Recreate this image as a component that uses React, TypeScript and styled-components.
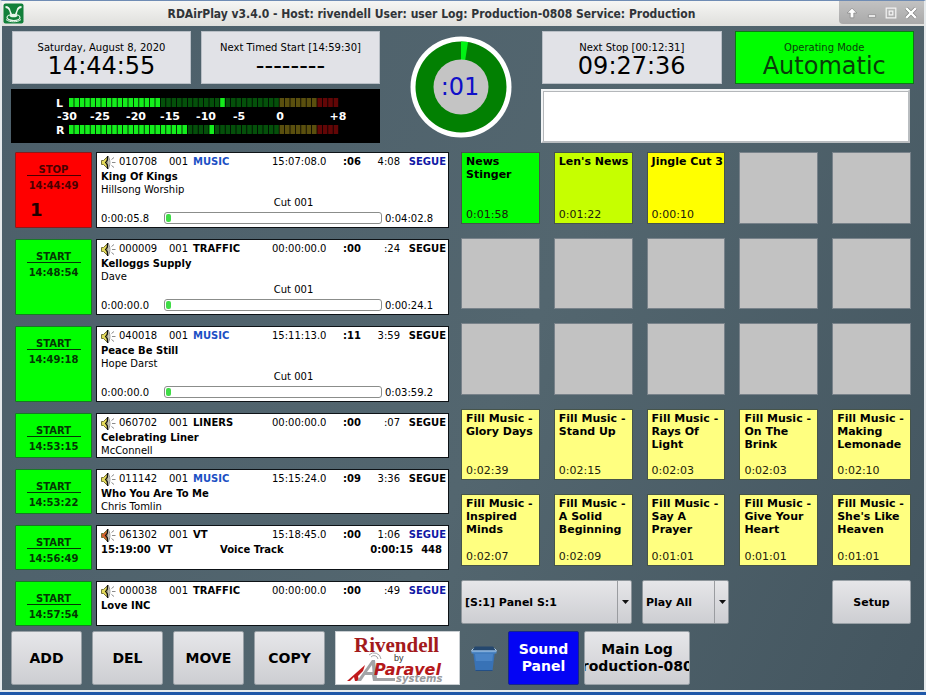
import React from "react";
import styled, { createGlobalStyle } from "styled-components";

const GlobalStyle = createGlobalStyle`
  *, *::before, *::after { box-sizing: border-box; }
  body {
    margin: 0;
    background: #2058a8;
    color: #000;
    font-family: "DejaVu Sans", Verdana, sans-serif;
    font-size: 10px;
  }
  button, select, textarea { font-family: inherit; color: inherit; margin: 0; }
`;

/* ---------- window frame ---------- */

const Frame = styled.div`
  display: flex;
  flex-direction: column;
  min-height: calc(100vh - 3px);
  margin-bottom: 3px;
  border: solid #e6eaec;
  border-width: 0 2px 2px 2px;
  border-top: 1px solid #6f8cb4;
  background: linear-gradient(115deg, #4c5f6a 0%, #53666f 55%, #43555f 100%);
`;

const TitleBar = styled.header`
  display: flex;
  align-items: center;
  height: 25px;
  padding-left: 1px;
  background: linear-gradient(#f6f6f4, #dfdfdc);
`;

const Title = styled.h1`
  flex: 1;
  margin: 0;
  text-align: center;
  font: bold 12px/24px "DejaVu Sans Condensed", "DejaVu Sans", sans-serif;
  color: #303438;
  white-space: nowrap;
`;

const WindowButtons = styled.div`
  display: flex;
  align-self: flex-start;
  align-items: center;
  justify-content: space-around;
  width: 85px;
  height: 23px;
  padding: 0 3px;
  border-bottom-left-radius: 4px;
  background: linear-gradient(#c2c2c2, #a9a9a9);
`;

const WindowButton = styled.button`
  display: grid;
  place-items: center;
  width: 18px;
  height: 20px;
  padding: 0;
  border: 0;
  background: none;
`;

/* ---------- header ---------- */

const Content = styled.main`
  display: flex;
  flex: 1;
  flex-direction: column;
  padding: 5px 10px 4px 9px;
`;

const Header = styled.div`
  display: grid;
  grid-template-columns: 369fr 161fr 373fr;
`;

const HeaderSide = styled.section`
  display: flex;
  flex-direction: column;
  gap: 5px;
`;

const PanelPair = styled.div<{ $gap: number }>`
  display: grid;
  grid-template-columns: 1fr 1fr;
  gap: ${(p) => p.$gap}px;
  padding-left: 1px;
`;

const InfoPanel = styled.div<{ $active?: boolean }>`
  display: flex;
  flex-direction: column;
  align-items: center;
  height: 53px;
  padding-top: 9px;
  border: 1px solid ${(p) => (p.$active ? "#0b7a12" : "#b9bfc6")};
  background: ${(p) => (p.$active ? "#00ff00" : "#e1e2e7")};
  color: ${(p) => (p.$active ? "#0a3d0a" : "#000")};
`;

const PanelLabel = styled.span`
  line-height: 13px;
  white-space: nowrap;
`;

const PanelValue = styled.span`
  font-size: 24px;
  line-height: 25px;
`;

const MeterPanel = styled.div`
  display: flex;
  height: 54px;
  padding-left: 40px;
  background: #000;
`;

const ClockCell = styled.div`
  display: flex;
  justify-content: center;
  padding-top: 5px;
`;

const MessageBox = styled.textarea`
  width: calc(100% - 4px);
  height: 54px;
  border: 2px solid #b9bdc0;
  border-top-color: #f2f4f5;
  border-left-color: #f2f4f5;
  outline: 0;
  background: #fff;
  box-shadow: inset 1px 1px 0 #b4b7ba;
  resize: none;
`;

/* ---------- log ---------- */

const Middle = styled.div`
  display: grid;
  grid-template-columns: 434fr 450fr;
  gap: 12px;
  padding: 9px 3px 5px 4px;
`;

const LogList = styled.ol`
  display: flex;
  flex-direction: column;
  gap: 11px;
  margin: 0;
  padding: 0;
  list-style: none;
`;

const LogRow = styled.li<{ $large?: boolean }>`
  display: grid;
  grid-template-columns: 77px 1fr;
  gap: 4px;
  height: ${(p) => (p.$large ? 76 : 45)}px;
`;

const StartButton = styled.button<{ $playing?: boolean }>`
  display: flex;
  flex-direction: column;
  align-items: center;
  padding: 10px 10px 0;
  border: 1px solid ${(p) => (p.$playing ? "#8c1a1a" : "#177a24")};
  border-radius: 1px;
  background: ${(p) => (p.$playing ? "#ff0000" : "#00ff00")};
  color: ${(p) => (p.$playing ? "#4a0000" : "#043604")};
  font-size: 10px;
  font-weight: bold;
`;

const StartLabel = styled.span`
  width: 54px;
  height: 13px;
  border-bottom: 1px solid currentColor;
  line-height: 13px;
`;

const StartTime = styled.span`
  line-height: 19px;
`;

const Machine = styled.span`
  align-self: flex-start;
  padding: 5px 0 0 4px;
  color: #200000;
  font-size: 18px;
  line-height: 20px;
`;

const Card = styled.div`
  display: flex;
  flex-direction: column;
  min-width: 0;
  padding: 1px 2px 0 4px;
  border: 1px solid #0d1216;
  background: #fff;
  white-space: nowrap;
`;

const CardTop = styled.div`
  display: grid;
  grid-template-columns: 18px 50px 24px 1fr 71px 18px 39px 46px;
  align-items: center;
  height: 16px;
  line-height: 16px;
`;

const Cell = styled.span<{ $bold?: boolean; $color?: string; $end?: boolean }>`
  color: ${(p) => p.$color ?? "#000"};
  font-weight: ${(p) => (p.$bold ? "bold" : "normal")};
  text-align: ${(p) => (p.$end ? "right" : "left")};
`;

const CardTitle = styled.strong`
  line-height: 14px;
`;

const CardArtist = styled.span`
  line-height: 12px;
`;

const VoiceRow = styled.div`
  display: grid;
  grid-template-columns: 57px 62px 1fr auto auto;
  padding-right: 4px;
  font-weight: bold;
  line-height: 14px;
`;

const Spaced = styled.span`
  padding-left: 8px;
`;

const CutName = styled.span`
  align-self: center;
  padding-left: 40px;
  line-height: 14px;
`;

const ProgressRow = styled.div`
  display: grid;
  grid-template-columns: 60px 1fr 61px;
  gap: 3px;
  align-items: center;
  height: 16px;
`;

const Progress = styled.div`
  height: 12px;
  padding: 1px;
  border: 1px solid #8b8d8b;
  border-radius: 3px;
  background: #fff;
`;

const ProgressFill = styled.div`
  width: 5px;
  height: 8px;
  border-radius: 2px;
  background: #3fdc46;
`;

/* ---------- sound panel ---------- */

const SoundColumn = styled.section`
  display: flex;
  flex-direction: column;
  gap: 14px;
  padding: 0 0 2px;
`;

const PadGrid = styled.div`
  display: grid;
  flex: 1;
  grid-template-columns: repeat(5, 1fr);
  grid-template-rows: repeat(5, 1fr);
  gap: 14px;
`;

const Pad = styled.button<{ $fill?: string }>`
  display: flex;
  flex-direction: column;
  justify-content: space-between;
  min-width: 0;
  min-height: 0;
  padding: 2px 0 2px 4px;
  border: 1px solid ${(p) => (p.$fill ? "#46544a" : "#78828a")};
  background: ${(p) => p.$fill ?? "#c2c2c2"};
  font-size: 11px;
  line-height: 13px;
  text-align: left;
`;

const PadTitle = styled.strong`
  white-space: pre;
`;

const PadTime = styled.span`
  color: #1c200c;
`;

const Controls = styled.div`
  display: grid;
  grid-template-columns: 171fr 87fr 83fr 79fr;
  column-gap: 10px;
  height: 44px;
`;

const SelectBox = styled.label`
  display: grid;
  min-width: 0;
`;

const Select = styled.select`
  grid-area: 1 / 1;
  width: 100%;
  min-width: 0;
  padding: 0 16px 0 3px;
  border: 1px solid #8d959b;
  border-radius: 2px;
  appearance: none;
  background: linear-gradient(#e6e6e9, #cdced2);
  font-size: 11px;
  font-weight: bold;
`;

const SelectArrow = styled.span`
  display: grid;
  grid-area: 1 / 1;
  justify-self: end;
  place-items: center;
  width: 15px;
  margin: 1px 0;
  border-left: 1px solid #9a9ca0;
  pointer-events: none;
`;

/* ---------- footer ---------- */

const Footer = styled.footer`
  display: flex;
  gap: 10px;
  height: 54px;
`;

const PushButton = styled.button<{ $active?: boolean; $width?: number; $small?: boolean }>`
  display: flex;
  align-items: center;
  justify-content: center;
  width: ${(p) => (p.$width ? `${p.$width}px` : "auto")};
  padding: 0;
  overflow: hidden;
  border: 1px solid ${(p) => (p.$active ? "#16268c" : "#98a0a6")};
  border-radius: 2px;
  background: ${(p) => (p.$active ? "#0404f4" : "linear-gradient(#e6e6e9, #cdced2)")};
  color: ${(p) => (p.$active ? "#fff" : "#000")};
  font-size: ${(p) => (p.$small ? 11 : 14)}px;
  font-weight: bold;
  line-height: 17px;
  white-space: pre;
`;

const LogoPanel = styled.div`
  width: 125px;
  border: 1px solid #c9ced2;
  background: #fff;
`;

const TrashButton = styled.button`
  display: grid;
  place-items: center;
  width: 28px;
  padding: 0;
  border: 0;
  background: none;
`;

const ViewButtons = styled.div`
  display: flex;
  gap: 5px;
`;

/* ---------- drawings ---------- */

const AppIcon = () => (
  <svg width="21" height="21" viewBox="0 0 21 21" aria-hidden="true">
    <rect x="0.5" y="0.5" width="20" height="20" rx="2" fill="#12803a" />
    <path d="M2.500 3c3 0 4.500 1.500 5 4.500L9 11H7C6.500 7 5 5.500 2.500 5zM18.500 3c-3 0-4.500 1.500-5 4.500L12 11h2c.5-4 2-5.500 4.500-6z" fill="#eef8ef" />
    <ellipse cx="10.500" cy="14.500" rx="6.500" ry="3" fill="none" stroke="#e8f6ea" strokeWidth="1.200" />
    <ellipse cx="10.500" cy="12.500" rx="4" ry="1.800" fill="#e8f6ea" />
    <path d="M3 16.500c3 3 12 3 15 0" fill="none" stroke="#e8f6ea" />
  </svg>
);

const Speaker = ({ color }: { color: string }) => (
  <svg width="15" height="15" viewBox="0 0 15 15" aria-hidden="true">
    <path d="M0.500 5.500h2L6 2v11L2.500 9.500h-2z" fill={color} stroke="#77733a" strokeWidth="1" />
    <path d="M7 1c2.500 3.500 2.500 9.500 0 13z" fill="#f4f4ee" stroke="#6c6c66" strokeWidth=".7" />
    <path d="M6.500 1v4L4.500 7.500l2 2.500v4" fill="none" stroke="#111" strokeWidth="1.100" />
    <path d="M10.500 4.500L13 2.500M11 7.500h3.500M10.500 10.500l2.500 2" stroke="#8a8a8a" strokeWidth="1" />
  </svg>
);

const SEGMENTS = 50;

const segmentColor = (i: number, level: number, peak: number) => {
  if (i < level || i === peak) return "#14ee1c";
  if (i < 39) return "#04500a";
  if (i < 46) return "#5a4f0e";
  return "#620606";
};

const Bar = ({ y, level, peak }: { y: number; level: number; peak: number }) => (
  <g>
    {Array.from({ length: SEGMENTS }, (_, i) => (
      <rect key={i} x={18 + i * 5.4} y={y} width="4.6" height="9" fill={segmentColor(i, level, peak)} />
    ))}
  </g>
);

const SCALE: [string, number][] = [
  ["-30", 16], ["-25", 49], ["-20", 85], ["-15", 119],
  ["-10", 155], ["-5", 188], ["0", 229], ["+8", 287],
];

const Meter = () => (
  <svg width="300" height="54" viewBox="0 0 300 54" role="img" aria-label="Audio levels"
    fontSize="11" fontWeight="bold" fill="#fff">
    <text x="5" y="18">L</text>
    <Bar y={9} level={17} peak={28} />
    {SCALE.map(([label, x]) => (
      <text key={label} x={x} y="31" textAnchor="middle">{label}</text>
    ))}
    <text x="5" y="45">R</text>
    <Bar y={36} level={22} peak={26} />
  </svg>
);

const PieClock = () => (
  <svg width="102" height="102" viewBox="0 0 102 102" role="img" aria-label="Time remaining">
    <circle cx="51" cy="51" r="50.500" fill="#fff" />
    <circle cx="51" cy="51" r="45.500" fill="#028002" />
    <path d="M51 51V5.500a45.500 45.500 0 0 1 7 .6z" fill="#00f414" />
    <circle cx="51" cy="51" r="27.500" fill="#c4c4c4" />
    <text x="50" y="59" textAnchor="middle" fontSize="24" fill="#1010c8">:01</text>
  </svg>
);

const Arrow = () => (
  <svg width="7" height="4" viewBox="0 0 7 4" aria-hidden="true"><path d="M0 0h7L3.500 4z" fill="#111" /></svg>
);

const Logo = () => (
  <svg width="122" height="52" viewBox="0 0 122 52" role="img" aria-label="Rivendell by Paravel Systems">
    <text x="18" y="20" fontFamily="Liberation Serif, serif" fontSize="21" fontWeight="bold" fill="#a31a1c">Rivendell</text>
    <text x="58" y="29" fontFamily="Liberation Sans, sans-serif" fontSize="9" fill="#333">by</text>
    <path d="M11 49L29 33l-2 6-5 5 1 5h-4l-1-4-4 4z" fill="#c01a1c" />
    <path d="M21 49L36 28h3l2 18h18v3H37l-1-6h-7l-4 6z" fill="#a2a4a6" />
    <path d="M31 40l5-7 .5 7z" fill="#fff" />
    <path d="M35 25a4 4 0 0 1 7 2M33 23a7 7 0 0 1 12 4" fill="none" stroke="#a2a4a6" strokeWidth="1" />
    <text x="60" y="50" fontSize="10" fontWeight="bold" fontStyle="italic" fill="#9a9c9e">systems</text>
    <text x="38" y="43" fontSize="16" fontWeight="bold" fontStyle="italic" fill="#b5181a">Paravel</text>
  </svg>
);

const Trash = () => (
  <svg width="26" height="25" viewBox="0 0 26 25" aria-hidden="true">
    <path d="M2 3l2-2.500h18L24 3v3H2z" fill="#24476e" />
    <path d="M2 5h22l-2.500 19.500h-17z" fill="#3872b6" />
    <path d="M4 8h18l-.6 7H4.800z" fill="#4a84c6" />
    <path d="M0.500 4.500h25v3h-25z" fill="#4c86c4" />
    <path d="M0.500 4.500l2-2M25.500 4.500l-2-2M0.500 5h25" stroke="#b5d2ee" strokeWidth="1" />
    <path d="M4.500 24.500h17" stroke="#234f86" strokeWidth="1" />
  </svg>
);

/* ---------- data ---------- */

const BLUE = "#1018a4";
const MUSIC = "#1c50c4";

type Entry = {
  start: string; cart: string; group: string; time: string; talk: string; length: string;
  title?: string; artist?: string; total?: string; elapsed?: string; playing?: boolean;
  segueBlue?: boolean; voice?: boolean;
};

const LOG: Entry[] = [
  { start: "14:44:49", cart: "010708", group: "MUSIC", time: "15:07:08.0", talk: ":06", length: "4:08", title: "King Of Kings", artist: "Hillsong Worship", elapsed: "0:00:05.8", total: "0:04:02.8", playing: true, segueBlue: true },
  { start: "14:48:54", cart: "000009", group: "TRAFFIC", time: "00:00:00.0", talk: ":00", length: ":24", title: "Kelloggs Supply", artist: "Dave", elapsed: "0:00:00.0", total: "0:00:24.1" },
  { start: "14:49:18", cart: "040018", group: "MUSIC", time: "15:11:13.0", talk: ":11", length: "3:59", title: "Peace Be Still", artist: "Hope Darst", elapsed: "0:00:00.0", total: "0:03:59.2" },
  { start: "14:53:15", cart: "060702", group: "LINERS", time: "00:00:00.0", talk: ":00", length: ":07", title: "Celebrating Liner", artist: "McConnell" },
  { start: "14:53:22", cart: "011142", group: "MUSIC", time: "15:15:24.0", talk: ":09", length: "3:36", title: "Who You Are To Me", artist: "Chris Tomlin" },
  { start: "14:56:49", cart: "061302", group: "VT", time: "15:18:45.0", talk: ":00", length: "1:06", voice: true, segueBlue: true },
  { start: "14:57:54", cart: "000038", group: "TRAFFIC", time: "00:00:00.0", talk: ":00", length: ":49", title: "Love INC", segueBlue: true },
];

type PadData = { title: string; time: string; fill: string } | null;

const Y = "#ffff80";
const PADS: PadData[] = [
  { title: "News\nStinger", time: "0:01:58", fill: "#00ff00" },
  { title: "Len's News", time: "0:01:22", fill: "#c6ff00" },
  { title: "Jingle Cut 3", time: "0:00:10", fill: "#ffff00" },
  null, null,
  null, null, null, null, null,
  null, null, null, null, null,
  { title: "Fill Music -\nGlory Days", time: "0:02:39", fill: Y },
  { title: "Fill Music -\nStand Up", time: "0:02:15", fill: Y },
  { title: "Fill Music -\nRays Of\nLight", time: "0:02:03", fill: Y },
  { title: "Fill Music -\nOn The\nBrink", time: "0:02:03", fill: Y },
  { title: "Fill Music -\nMaking\nLemonade", time: "0:02:10", fill: Y },
  { title: "Fill Music -\nInspired\nMinds", time: "0:02:07", fill: Y },
  { title: "Fill Music -\nA Solid\nBeginning", time: "0:02:09", fill: Y },
  { title: "Fill Music -\nSay A\nPrayer", time: "0:01:01", fill: Y },
  { title: "Fill Music -\nGive Your\nHeart", time: "0:01:01", fill: Y },
  { title: "Fill Music -\nShe's Like\nHeaven", time: "0:01:01", fill: Y },
];

/* ---------- parts ---------- */

const LogEntry = ({ e }: { e: Entry }) => (
  <LogRow $large={!!e.total}>
    <StartButton $playing={e.playing}>
      <StartLabel>{e.playing ? "STOP" : "START"}</StartLabel>
      <StartTime>{e.start}</StartTime>
      {e.playing && <Machine>1</Machine>}
    </StartButton>
    <Card>
      <CardTop>
        <Speaker color={e.voice ? "#d2622c" : "#e6dc5a"} />
        <Cell>{e.cart}</Cell>
        <Cell>001</Cell>
        <Cell $bold $color={e.group === "MUSIC" ? MUSIC : "#000"}>{e.group}</Cell>
        <Cell>{e.time}</Cell>
        <Cell $bold>{e.talk}</Cell>
        <Cell $end>{e.length}</Cell>
        <Cell $bold $end $color={e.segueBlue ? BLUE : "#000"}>SEGUE</Cell>
      </CardTop>
      {e.voice ? (
        <VoiceRow>
          <span>15:19:00</span>
          <span>VT</span>
          <span>Voice Track</span>
          <span>0:00:15</span>
          <Spaced>448</Spaced>
        </VoiceRow>
      ) : (
        <CardTitle>{e.title}</CardTitle>
      )}
      {e.artist && <CardArtist>{e.artist}</CardArtist>}
      {e.total && (
        <>
          <CutName>Cut 001</CutName>
          <ProgressRow>
            <span>{e.elapsed}</span>
            <Progress><ProgressFill /></Progress>
            <span>{e.total}</span>
          </ProgressRow>
        </>
      )}
    </Card>
  </LogRow>
);

const Picker = ({ label, value }: { label: string; value: string }) => (
  <SelectBox>
    <Select aria-label={label} defaultValue={value}>
      <option>{value}</option>
    </Select>
    <SelectArrow><Arrow /></SelectArrow>
  </SelectBox>
);

export default function App() {
  return (
    <>
      <GlobalStyle />
      <Frame>
        <TitleBar>
          <AppIcon />
          <Title>RDAirPlay v3.4.0 - Host: rivendell User: user Log: Production-0808 Service: Production</Title>
          <WindowButtons>
            <WindowButton aria-label="Shade">
              <svg width="12" height="12" viewBox="0 0 10 10"><path d="M5 1l4 4H6.500v4h-3V5H1z" fill="#fff" stroke="#777" strokeWidth=".5" /></svg>
            </WindowButton>
            <WindowButton aria-label="Minimize">
              <svg width="12" height="12" viewBox="0 0 10 10"><path d="M2 6.500h6v2H2z" fill="#fff" stroke="#777" strokeWidth=".5" /></svg>
            </WindowButton>
            <WindowButton aria-label="Maximize">
              <svg width="12" height="12" viewBox="0 0 10 10"><path d="M1 1h8v8H1zM3.500 3.500h3v3h-3z" fill="none" stroke="#f4f4f4" /></svg>
            </WindowButton>
            <WindowButton aria-label="Close">
              <svg width="12" height="12" viewBox="0 0 10 10"><path d="M1 1l8 8M9 1L1 9" stroke="#777" strokeWidth="3" /><path d="M1 1l8 8M9 1L1 9" stroke="#fff" strokeWidth="2" /></svg>
            </WindowButton>
          </WindowButtons>
        </TitleBar>
        <Content>
          <Header>
            <HeaderSide>
              <PanelPair $gap={10}>
                <InfoPanel>
                  <PanelLabel>Saturday, August 8, 2020</PanelLabel>
                  <PanelValue>14:44:55</PanelValue>
                </InfoPanel>
                <InfoPanel>
                  <PanelLabel>Next Timed Start [14:59:30]</PanelLabel>
                  <PanelValue>--------</PanelValue>
                </InfoPanel>
              </PanelPair>
              <MeterPanel><Meter /></MeterPanel>
            </HeaderSide>
            <ClockCell><PieClock /></ClockCell>
            <HeaderSide>
              <PanelPair $gap={13}>
                <InfoPanel>
                  <PanelLabel>Next Stop [00:12:31]</PanelLabel>
                  <PanelValue>09:27:36</PanelValue>
                </InfoPanel>
                <InfoPanel $active>
                  <PanelLabel>Operating Mode</PanelLabel>
                  <PanelValue>Automatic</PanelValue>
                </InfoPanel>
              </PanelPair>
              <MessageBox aria-label="Messages" readOnly />
            </HeaderSide>
          </Header>
          <Middle>
            <LogList>
              {LOG.map((e) => <LogEntry key={e.start} e={e} />)}
            </LogList>
            <SoundColumn>
              <PadGrid>
                {PADS.map((p, i) => (
                  <Pad key={i} $fill={p?.fill} aria-label={p ? undefined : "Empty"}>
                    {p && <PadTitle>{p.title}</PadTitle>}
                    {p && <PadTime>{p.time}</PadTime>}
                  </Pad>
                ))}
              </PadGrid>
              <Controls>
                <Picker label="Panel" value="[S:1] Panel S:1" />
                <Picker label="Play mode" value="Play All" />
                <span />
                <PushButton $small>Setup</PushButton>
              </Controls>
            </SoundColumn>
          </Middle>
          <Footer>
            <PushButton $width={71}>ADD</PushButton>
            <PushButton $width={71}>DEL</PushButton>
            <PushButton $width={71}>MOVE</PushButton>
            <PushButton $width={71}>COPY</PushButton>
            <LogoPanel><Logo /></LogoPanel>
            <TrashButton aria-label="Delete"><Trash /></TrashButton>
            <ViewButtons>
              <PushButton $active $width={71}>{"Sound\nPanel"}</PushButton>
              <PushButton $width={106}>{"Main Log\nProduction-0808"}</PushButton>
            </ViewButtons>
          </Footer>
        </Content>
      </Frame>
    </>
  );
}
